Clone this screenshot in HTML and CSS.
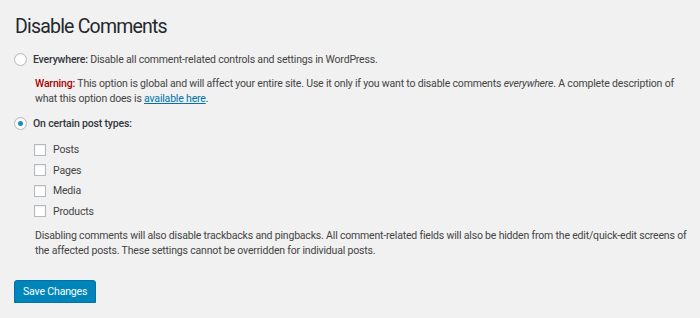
FILE: index.html
```html
<!DOCTYPE html>
<html>
<head>
<meta charset="utf-8">
<link rel="stylesheet" href="styles.css">
</head>
<body>
<div class="wrap">
  <h1 class="title">Disable Comments</h1>
  <div class="option">
    <span class="radio"></span>
    <span class="label"><strong>Everywhere:</strong> Disable all comment-related controls and settings in WordPress.</span>
  </div>
  <p class="indent warning-text"><strong class="warn">Warning:</strong> This option is global and will affect your entire site. Use it only if you want to disable comments <em>everywhere</em>. A complete description of what this option does is <a href="#" class="link">available here</a>.</p>
  <div class="option option-2">
    <span class="radio checked"></span>
    <span class="label"><strong>On certain post types:</strong></span>
  </div>
  <ul class="types">
    <li class="type"><span class="check"></span>Posts</li>
    <li class="type"><span class="check"></span>Pages</li>
    <li class="type"><span class="check"></span>Media</li>
    <li class="type"><span class="check"></span>Products</li>
  </ul>
  <p class="indent desc">Disabling comments will also disable trackbacks and pingbacks. All comment-related fields will also be hidden from the edit/quick-edit screens of the affected posts. These settings cannot be overridden for individual posts.</p>
  <button class="button">Save Changes</button>
</div>
</body>
</html>
```
FILE: styles.css
```css
html, body {
  margin: 0;
  padding: 0;
  background: #f1f1f1;
}
body {
  font-family: Roboto, "Open Sans", sans-serif;
  font-size: 10.5px;
  letter-spacing: -0.18px;
  color: #444;
}
.wrap {
  display: flex;
  flex-direction: column;
  align-items: flex-start;
  padding: 0 0 0 14px;
  width: 686px;
}
.title {
  font-size: 19.5px;
  letter-spacing: -0.8px;
  font-weight: 400;
  color: #23282d;
  margin: 14px 0 0 1px;
  line-height: 26px;
}
.option {
  display: flex;
  align-items: center;
  gap: 6px;
  height: 16px;
  margin-top: 11px;
}
.option-2 {
  margin-top: 9px;
}
.radio {
  width: 11px;
  height: 11px;
  border: 1px solid #b4b9be;
  border-radius: 50%;
  background: #fff;
  box-shadow: inset 0 1px 2px rgba(0,0,0,0.07);
  display: flex;
  align-items: center;
  justify-content: center;
}
.radio.checked::after {
  content: "";
  width: 5px;
  height: 5px;
  border-radius: 50%;
  background: #1e8cbe;
}
.label strong {
  font-weight: 500;
  color: #32373c;
}
.indent {
  margin: 0 0 0 21px;
}
.warning-text {
  margin-top: 9px;
  line-height: 15px;
  width: 652px;
}
.warn {
  color: #a00;
  font-weight: 500;
}
.link {
  color: #0073aa;
}
.types {
  list-style: none;
  padding: 0;
  margin: 12px 0 0 20px;
  display: flex;
  flex-direction: column;
  gap: 7.5px;
}
.type {
  display: flex;
  align-items: center;
  gap: 7px;
  height: 13px;
}
.check {
  width: 10px;
  height: 10px;
  border: 1px solid #b4b9be;
  background: #fff;
  box-shadow: inset 0 1px 2px rgba(0,0,0,0.07);
}
.desc {
  margin-top: 10px;
  line-height: 15px;
  width: 660px;
}
.button {
  margin-top: 22px;
  height: 23px;
  padding: 0 8px;
  background: #0085ba;
  border: 1px solid #0073aa;
  border-radius: 3px;
  box-shadow: 0 1px 0 #006799;
  color: #fff;
  font-family: Roboto, "Open Sans", sans-serif;
  font-size: 10.5px;
  letter-spacing: -0.15px;
}
```
